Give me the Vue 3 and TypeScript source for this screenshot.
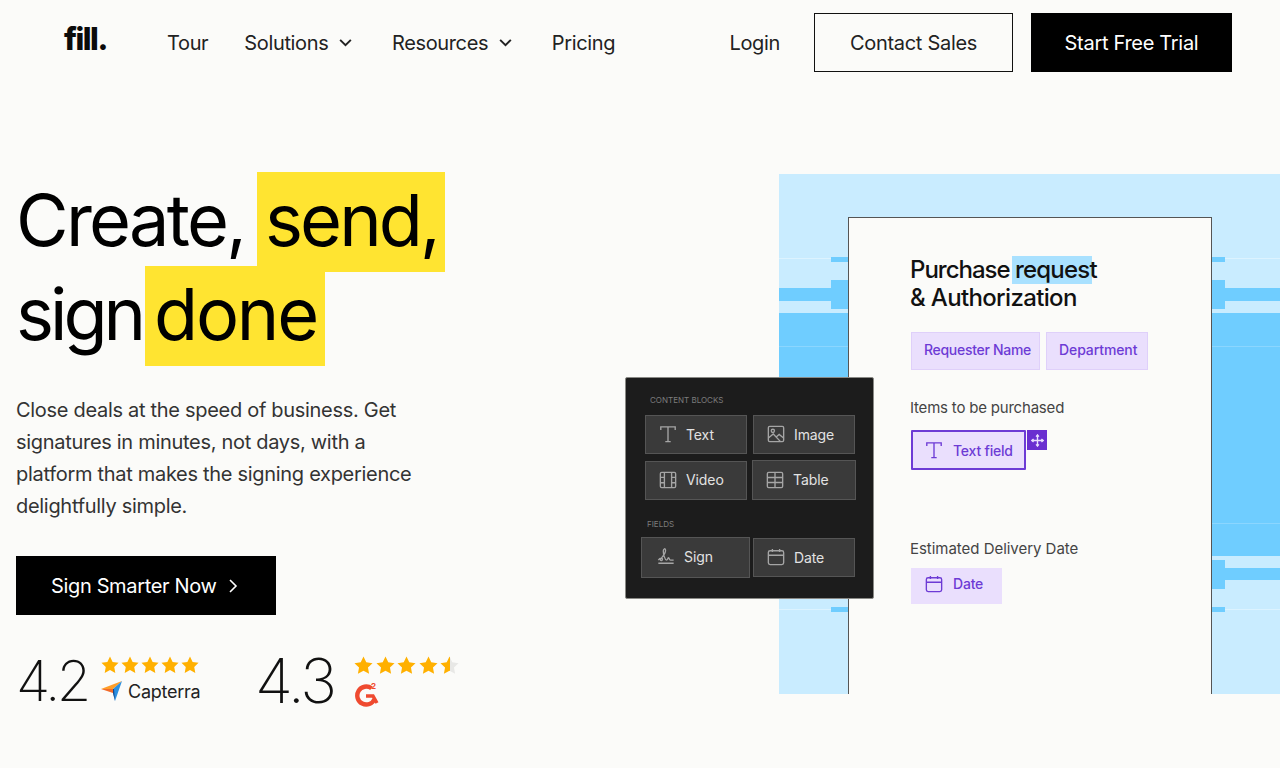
<template>
  <div class="page">
    <svg class="defs" width="0" height="0" aria-hidden="true">
      <symbol id="i-text" viewBox="0 0 20 20">
        <path d="M2 5.500V2H18V5.500M10 2V18.500M7 18.500H13" />
      </symbol>
      <symbol id="i-image" viewBox="0 0 20 20">
        <rect x="1.500" y="1.500" width="17" height="17" rx="1.500" />
        <circle cx="6.500" cy="6.500" r="1.800" />
        <path d="M1.500 14.500L7 10L15 18.500M10.500 13L13.500 10.500L18.500 14.500" />
      </symbol>
      <symbol id="i-video" viewBox="0 0 20 20">
        <rect x="1.500" y="1.500" width="17" height="17" rx="1.500" />
        <path d="M6 1.500V18.500M14 1.500V18.500M1.500 7H6M1.500 13H6M14 7H18.500M14 13H18.500" />
      </symbol>
      <symbol id="i-table" viewBox="0 0 20 20">
        <rect x="1.500" y="1.500" width="17" height="17" rx="1.500" />
        <path d="M1.500 7.200H18.500M1.500 12.800H18.500M10 1.500V18.500" />
      </symbol>
      <symbol id="i-sign" viewBox="0 0 20 20">
        <path d="M1.500 18H18.500M1.500 14.500C3.500 11.500 6.500 12 6 14C5.600 15.500 3.500 15.500 3.800 14C4.200 12 9.500 8.500 9.500 4C9.500 1 7 1.500 7 4.500C7 8.500 9 14.500 10.500 14.500C12 14.500 12 11.500 13 12C13.800 12.400 13.500 14.500 15 14.500H18.500" />
      </symbol>
      <symbol id="i-date" viewBox="0 0 20 20">
        <rect x="1.500" y="3" width="17" height="15.500" rx="2" />
        <path d="M1.500 8H18.500M6 1V4.500M14 1V4.500" />
      </symbol>
    </svg>

    <header class="nav">
      <div class="logo">fill.</div>
      <nav class="links">
        <a v-for="link in links" :key="link.label" class="link">
          {{ link.label }}
          <svg v-if="link.caret" class="caret" viewBox="0 0 14 14"><path d="M2 4.500L7 9.500L12 4.500" /></svg>
        </a>
      </nav>
      <a class="login">Login</a>
      <a class="btn btn-outline">Contact Sales</a>
      <a class="btn btn-black">Start Free Trial</a>
    </header>

    <main class="hero">
      <section class="intro">
        <h1 class="headline">
          <span class="line"><span class="word word-create">Create,</span><span class="mark mark-send">send,</span></span>
          <span class="line"><span class="word word-sign">sign</span><span class="mark mark-done">done</span></span>
        </h1>
        <p class="lead">
          Close deals at the speed of business. Get<br />
          signatures in minutes, not days, with a<br />
          platform that makes the signing experience<br />
          delightfully simple.
        </p>
        <a class="cta">
          Sign Smarter Now
          <svg class="cta-arrow" viewBox="0 0 10 16"><path d="M2 2L8 8L2 14" /></svg>
        </a>
        <div class="ratings">
          <div class="rating rating-capterra">
            <span class="score">4.2</span>
            <div class="rating-side">
              <div class="stars">
                <svg v-for="n in 5" :key="n" class="star" viewBox="0 0 20 20">
                  <polygon :points="starPoints" fill="#ffb000" />
                </svg>
              </div>
              <div class="capterra">
                <svg class="capterra-logo" viewBox="0 0 22 22">
                  <polygon points="0,9 12,9 12,13" fill="#f26b2a" />
                  <polygon points="0,9 12,9 21,1" fill="#ff9d28" />
                  <polygon points="12,9 21,1 14,21 12,13" fill="#2a8fe0" />
                  <polygon points="12,9 12,13 14,21 13,9" fill="#16478c" />
                </svg>
                <span>Capterra</span>
              </div>
            </div>
          </div>
          <div class="rating rating-g2">
            <span class="score">4.3</span>
            <div class="rating-side">
              <div class="stars">
                <svg v-for="n in 4" :key="n" class="star" viewBox="0 0 20 20">
                  <polygon :points="starPoints" fill="#ffb000" />
                </svg>
                <svg class="star" viewBox="0 0 20 20">
                  <defs>
                    <linearGradient id="half-star">
                      <stop offset="50%" stop-color="#ffb000" />
                      <stop offset="50%" stop-color="#e8e8e6" />
                    </linearGradient>
                  </defs>
                  <polygon :points="starPoints" fill="url(#half-star)" />
                </svg>
              </div>
              <svg class="g2-logo" viewBox="0 0 26 26">
                <path d="M17.500 7.200A9 9 0 1 0 20.600 18" fill="none" stroke="#ef4a30" stroke-width="4.400" />
                <path d="M12 15H19L23 22" fill="none" stroke="#ef4a30" stroke-width="3.400" />
                <text x="17" y="7.500" class="g2-two">2</text>
              </svg>
            </div>
          </div>
        </div>
      </section>

      <section class="stage">
        <div class="blue">
          <i v-for="(s, i) in stubs" :key="i" class="stub" :style="s" />
          <div class="doc">
            <h2 class="doc-title">Purchase <span class="doc-mark">request</span><br /><span class="doc-second">&amp; Authorization</span></h2>
            <div class="chips">
              <span class="chip chip-name">Requester Name</span>
              <span class="chip chip-dept">Department</span>
            </div>
            <div class="doc-label">Items to be purchased</div>
            <div class="field-wrap">
              <span class="chip chip-field">
                <svg class="icon"><use href="#i-text" /></svg>
                Text field
              </span>
              <span class="move">
                <svg viewBox="0 0 14 14">
                  <path d="M7 1V13M1 7H13M5.500 2.800L7 1L8.500 2.800M5.500 11.200L7 13L8.500 11.200M2.800 5.500L1 7L2.800 8.500M11.200 5.500L13 7L11.200 8.500" />
                </svg>
              </span>
            </div>
            <div class="doc-label doc-label-date">Estimated Delivery Date</div>
            <span class="chip chip-date">
              <svg class="icon"><use href="#i-date" /></svg>
              Date
            </span>
          </div>
        </div>

        <aside class="panel">
          <div class="panel-label">CONTENT BLOCKS</div>
          <div class="blocks">
            <div v-for="b in contentBlocks" :key="b.label" :class="['block', 'block-' + b.icon]">
              <svg class="icon"><use :href="'#i-' + b.icon" /></svg>
              {{ b.label }}
            </div>
          </div>
          <div class="panel-label panel-label-fields">FIELDS</div>
          <div class="blocks blocks-fields">
            <div class="block block-sign">
              <svg class="icon"><use href="#i-sign" /></svg>
              Sign
            </div>
            <div class="block block-date">
              <svg class="icon"><use href="#i-date" /></svg>
              Date
            </div>
          </div>
        </aside>
      </section>
    </main>
  </div>
</template>

<script setup lang="ts">
const links = [
  { label: 'Tour', caret: false },
  { label: 'Solutions', caret: true },
  { label: 'Resources', caret: true },
  { label: 'Pricing', caret: false },
]

const contentBlocks = [
  { label: 'Text', icon: 'text' },
  { label: 'Image', icon: 'image' },
  { label: 'Video', icon: 'video' },
  { label: 'Table', icon: 'table' },
]

const starPoints = '10,0.5 12.9,6.6 19.5,7.5 14.7,12.1 15.9,18.8 10,15.6 4.1,18.8 5.3,12.1 0.5,7.5 7.1,6.6'

// darker blue notches that poke out from behind the document
const stub = (left: number, top: number, w: number, h: number) => ({
  left: left + 'px',
  top: top + 'px',
  width: w + 'px',
  height: h + 'px',
})

const stubs = [
  stub(52, 83, 17, 5),
  stub(52, 106, 17, 29),
  stub(432, 83, 14, 5),
  stub(432, 106, 14, 29),
  stub(432, 386, 14, 29),
  stub(432, 433, 14, 5),
  stub(52, 386, 17, 29),
  stub(52, 433, 17, 5),
]
</script>

<style scoped>
.page {
  width: 1280px;
  height: 768px;
  overflow: hidden;
  background: #fbfbf9;
  color: #0b0b0b;
  font-family: Inter, "Liberation Sans", sans-serif;
}

.defs {
  position: absolute;
}

symbol,
.icon {
  fill: none;
  stroke: currentColor;
  stroke-width: 1.5;
}

.nav {
  display: flex;
  align-items: center;
  height: 85px;
  padding: 0 48px 0 65px;
  box-sizing: border-box;
}

.logo {
  width: 103px;
  margin-top: -9px;
  margin-left: -1px;
  font-size: 31px;
  font-weight: 800;
  letter-spacing: -1.5px;
}

.links {
  display: flex;
  gap: 36px;
  font-size: 20px;
  letter-spacing: -0.35px;
  color: #222;
}

.link {
  display: flex;
  align-items: center;
  gap: 10px;
}

.caret {
  width: 15px;
  height: 15px;
  margin-right: 2.5px;
  fill: none;
  stroke: #222;
  stroke-width: 1.8;
}

.login {
  margin-left: auto;
  margin-right: 34px;
  font-size: 20px;
  letter-spacing: -0.35px;
  color: #222;
}

.btn {
  display: flex;
  align-items: center;
  justify-content: center;
  height: 59px;
  font-size: 20px;
  letter-spacing: -0.3px;
  box-sizing: border-box;
}

.btn-outline {
  width: 199px;
  margin-right: 18px;
  border: 1px solid #111;
  color: #222;
}

.btn-black {
  width: 201px;
  background: #000;
  color: #fff;
}

.hero {
  display: flex;
  padding-top: 87px;
}

.intro {
  width: 610px;
  padding-left: 16px;
  box-sizing: border-box;
}

.headline {
  margin: 0;
  font-size: 72px;
  font-weight: 400;
  letter-spacing: -2.7px;
  color: #000;
}

.line {
  display: block;
  height: 94px;
  line-height: 96px;
  white-space: nowrap;
}

.word {
  display: inline-block;
  vertical-align: top;
}

.word-create {
  width: 241px;
}

.word-sign {
  width: 129px;
  letter-spacing: -4px;
}

.mark {
  display: inline-block;
  height: 100px;
  vertical-align: top;
  background: #ffe431;
  box-sizing: border-box;
}

.mark-send {
  width: 188px;
  padding-left: 8px;
  letter-spacing: -2.9px;
}

.mark-done {
  width: 180px;
  padding-left: 9px;
  letter-spacing: -2.2px;
}

.lead {
  margin: 34px 0 0;
  font-size: 20px;
  line-height: 32px;
  letter-spacing: -0.3px;
  color: #333;
}

.cta {
  display: flex;
  align-items: center;
  width: 260px;
  height: 59px;
  margin-top: 34px;
  padding-left: 35px;
  box-sizing: border-box;
  background: #000;
  color: #fff;
  font-size: 20px;
  letter-spacing: -0.35px;
}

.cta-arrow {
  width: 10px;
  height: 16px;
  margin-left: 12px;
  fill: none;
  stroke: #fff;
  stroke-width: 1.6;
}

.ratings {
  display: flex;
  margin-top: 32px;
}

.rating {
  display: flex;
}

.rating-capterra {
  width: 239px;
}

.score {
  flex-shrink: 0;
  font-size: 56px;
  font-weight: 200;
  line-height: 68px;
  letter-spacing: -3.5px;
  color: #111;
}

.rating-capterra .score {
  width: 85px;
}

.rating-g2 .score {
  width: 99px;
  font-size: 62px;
  letter-spacing: -3px;
}

.rating-side {
  padding-top: 9px;
}

.stars {
  display: flex;
  gap: 2px;
}

.star {
  width: 18px;
  height: 18px;
}

.rating-g2 .stars {
  gap: 2.5px;
}

.rating-g2 .star {
  width: 19px;
  height: 19px;
}

.capterra {
  display: flex;
  align-items: center;
  gap: 5px;
  margin-top: 6px;
  font-size: 18px;
  letter-spacing: -0.25px;
  color: #222;
}

.capterra-logo {
  width: 22px;
  height: 22px;
}

.g2-logo {
  display: block;
  width: 26px;
  height: 26px;
  margin-top: 6px;
}

.g2-two {
  font-size: 8px;
  font-weight: 700;
  fill: #ef4a30;
}

.stage {
  position: relative;
  flex: 1;
  padding-left: 169px;
  padding-top: 2px;
}

.blue {
  position: relative;
  height: 520px;
  padding: 43px 0 0 69px;
  box-sizing: border-box;
  background: linear-gradient(
    #c9ecff 0 84px,
    #dcf3ff 84px 85px,
    #c9ecff 85px 114px,
    #6fcdff 114px 127px,
    #c9ecff 127px 139px,
    #6fcdff 139px 172px,
    #8bd6ff 172px 173px,
    #6fcdff 173px 349px,
    #8bd6ff 349px 350px,
    #6fcdff 350px 382px,
    #c9ecff 382px 394px,
    #6fcdff 394px 406px,
    #c9ecff 406px 435px,
    #dcf3ff 435px 436px,
    #c9ecff 436px 520px
  );
}

.stub {
  position: absolute;
  background: #6fcdff;
}

.doc {
  position: relative;
  width: 364px;
  height: 477px;
  padding: 38px 0 0 61px;
  box-sizing: border-box;
  border: 1px solid #555;
  border-bottom: 0;
  background: #fbfbf9;
}

.doc-title {
  margin: 0;
  font-size: 24px;
  font-weight: 500;
  line-height: 28px;
  letter-spacing: -1px;
  color: #111;
}

.doc-mark {
  display: inline-block;
  width: 80px;
  margin-left: -3px;
  padding-left: 3px;
  box-sizing: border-box;
  white-space: nowrap;
  letter-spacing: -0.8px;
  background: #a9e1ff;
}

.doc-second {
  letter-spacing: -0.65px;
}

.chips {
  display: flex;
  gap: 6px;
  margin-top: 20px;
  margin-left: 1px;
}

.chip {
  display: flex;
  align-items: center;
  box-sizing: border-box;
  background: #eadffd;
  color: #6d3bd5;
  font-size: 14px;
  font-weight: 500;
  letter-spacing: -0.2px;
}

.chip-name,
.chip-dept {
  height: 38px;
  padding: 0 0 3px 12px;
  border: 1px solid #dfd0fa;
}

.chip-name {
  width: 129px;
  letter-spacing: -0.3px;
}

.chip-dept {
  width: 102px;
  letter-spacing: -0.1px;
}

.doc-label {
  margin-top: 29px;
  font-size: 15px;
  line-height: 18px;
  letter-spacing: -0.2px;
  color: #444;
}

.field-wrap {
  display: flex;
  align-items: flex-start;
  margin-top: 13px;
  margin-left: 1px;
}

.chip-field {
  width: 115px;
  height: 40px;
  padding-left: 12px;
  gap: 10px;
  border: 2px solid #6d3bd5;
  border-radius: 1px;
}

.move {
  display: flex;
  align-items: center;
  justify-content: center;
  width: 20px;
  height: 20px;
  margin-left: 1px;
  background: #6a2fd0;
}

.move svg {
  width: 13px;
  height: 13px;
  fill: none;
  stroke: #e9defd;
  stroke-width: 1.5;
}

.doc-label-date {
  margin-top: 70px;
  letter-spacing: -0.03px;
}

.chip-date {
  width: 91px;
  height: 36px;
  margin-top: 10px;
  margin-left: 1px;
  padding: 0 0 5px 14px;
  gap: 10px;
}

.chip .icon {
  stroke-width: 1.7;
}

.icon {
  width: 18px;
  height: 18px;
  flex-shrink: 0;
}

.panel {
  position: absolute;
  left: 15px;
  top: 205px;
  width: 249px;
  height: 222px;
  padding: 17px 19px 0;
  box-sizing: border-box;
  border: 1px solid #8a8a86;
  border-radius: 2px;
  background: #1c1c1c;
}

.panel-label {
  padding-left: 5px;
  font-size: 8px;
  line-height: 10px;
  letter-spacing: 0;
  color: #7d7d7d;
}

.panel-label-fields {
  padding-left: 2px;
  margin-top: 19px;
}

.blocks {
  display: grid;
  grid-template-columns: 102px 102px;
  gap: 6px;
  align-items: center;
  margin-top: 10px;
}

.blocks-fields {
  margin-top: 8px;
}

.block {
  display: flex;
  align-items: center;
  gap: 9px;
  height: 39px;
  padding: 0 0 1px 13px;
  box-sizing: border-box;
  border: 1px solid #555;
  background: #3a3a3a;
  color: #e2e2e2;
  font-size: 14px;
  letter-spacing: -0.1px;
}

.block-sign {
  width: 109px;
  height: 41px;
  margin-left: -4px;
  padding: 0 0 3px 15px;
}

.block-date {
  padding-bottom: 1px;
}

.block-table {
  width: 104px;
  height: 40px;
  margin-left: -1px;
}

.block .icon {
  color: #a5a5a5;
}
</style>

<style>
body {
  background: #fbfbf9;
}
</style>
